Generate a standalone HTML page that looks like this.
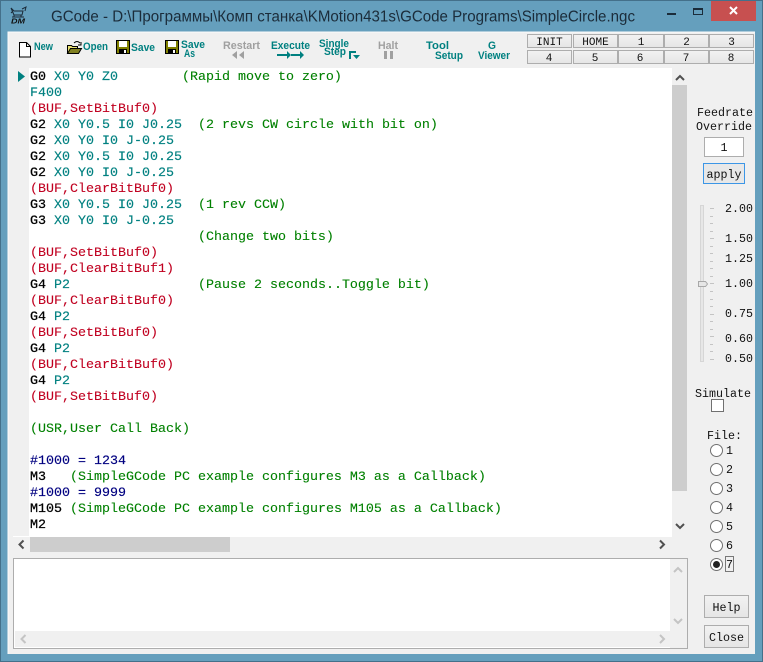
<!DOCTYPE html>
<html><head><meta charset="utf-8"><style>
html,body{margin:0;padding:0;background:#659fbd;overflow:hidden}
svg{display:block;position:absolute;left:0;top:0}
text{white-space:pre}
.c{font:13.33px "Liberation Mono",monospace}
.k{fill:#000;stroke:#000;stroke-width:.25}.t{fill:#008080;stroke:#008080;stroke-width:.15}.g{fill:#008000;stroke:#008000;stroke-width:.1}.r{fill:#c00020;stroke:#c00020;stroke-width:.1}.n{fill:#000080;stroke:#000080;stroke-width:.15}
.m{font:11.67px "Liberation Mono",monospace;fill:#111}
.b{font:bold 11px "Liberation Sans",sans-serif;fill:#008080}
.d{fill:#a0a0a0}
.btn{fill:#ececec;stroke:#adadad}
.arr{fill:none;stroke:#505050;stroke-width:2}
.arl{fill:none;stroke:#c4c4c4;stroke-width:2}
.tick{fill:#c4c4c4}
.rad{fill:#fff;stroke:#707070}
</style></head><body>
<svg width="763" height="662" viewBox="0 0 763 662" xmlns="http://www.w3.org/2000/svg">
<defs><linearGradient id="bg" x1="0" y1="0" x2="0" y2="1"><stop offset="0" stop-color="#f2f2f2"/><stop offset="1" stop-color="#e5e5e5"/></linearGradient></defs>
<rect x="0" y="0" width="763" height="662" fill="#659fbd"/>
<rect x="0.5" y="0.5" width="762" height="661" fill="none" stroke="#44708a"/>
<!-- title -->
<g stroke="#1a2a38" fill="none" stroke-width="1">
<path d="M11 8l3 3h9l-1 4h-8zM22 9l4-2-1 4M13 11l-2 2M14 15v2M21 15v2M12 17h12"/>
</g>
<text x="11" y="23.500" font-family="Liberation Sans" font-size="7" font-weight="bold" font-style="italic" fill="#111" textLength="14" lengthAdjust="spacingAndGlyphs">DM</text>
<text x="51" y="21.500" font-family="Liberation Sans,Noto Sans CJK SC,sans-serif" font-size="15.500" fill="#1b2c3a" textLength="584" lengthAdjust="spacingAndGlyphs">GCode - D:\Программы\Комп станка\KMotion431s\GCode Programs\SimpleCircle.ngc</text>
<rect x="667" y="13" width="9" height="2" fill="#1b2c3a"/>
<rect x="693.500" y="8.500" width="9" height="6" fill="none" stroke="#1b2c3a"/><rect x="693" y="8" width="10" height="2" fill="#1b2c3a"/>
<rect x="711" y="1" width="45" height="20" fill="#c75050"/>
<path d="M730 7l7 7M737 7l-7 7" stroke="#fff" stroke-width="2"/>
<!-- client -->
<rect x="8" y="32" width="747" height="622" fill="#f0f0f0"/>
<path d="M8 654V32H755" fill="none" stroke="#fbfbfb"/>
<!-- toolbar icons -->
<path d="M19.500 42.500h7l4 4v10.500h-11z" fill="#fff" stroke="#000"/><path d="M26.500 42.500v4h4" fill="none" stroke="#000"/>
<path d="M67.500 45.500h4l1 1h5v7h-10z" fill="#e8e070" stroke="#000"/><path d="M67.500 53.500l3-5h11l-3 5z" fill="#808020" stroke="#000"/><path d="M74 43c2-2 4-2 6 0M81 42v3h-3" fill="none" stroke="#000"/>
<rect x="116.500" y="40.500" width="13" height="13" fill="#808000" stroke="#000"/><rect x="119" y="41" width="8" height="6" fill="#fff"/><rect x="119" y="49" width="8" height="5" fill="#000"/><rect x="124" y="50" width="2" height="3" fill="#fff"/>
<g transform="translate(49,0)"><rect x="116.500" y="40.500" width="13" height="13" fill="#808000" stroke="#000"/><rect x="119" y="41" width="8" height="6" fill="#fff"/><rect x="119" y="49" width="8" height="5" fill="#000"/><rect x="124" y="50" width="2" height="3" fill="#fff"/></g>
<!-- toolbar text -->
<text class="b" x="34" y="50" textLength="19" lengthAdjust="spacingAndGlyphs">New</text>
<text class="b" x="83" y="50" textLength="25" lengthAdjust="spacingAndGlyphs">Open</text>
<text class="b" x="131" y="51" textLength="24" lengthAdjust="spacingAndGlyphs">Save</text>
<text class="b" x="181" y="48" textLength="24" lengthAdjust="spacingAndGlyphs">Save</text>
<text class="b" x="184" y="57" textLength="11" lengthAdjust="spacingAndGlyphs">As</text>
<text class="b d" x="223" y="49" textLength="37" lengthAdjust="spacingAndGlyphs">Restart</text>
<path d="M232 55l5-4v8zM239 55l5-4v8z" fill="#a0a0a0"/>
<text class="b" x="271" y="49" textLength="39" lengthAdjust="spacingAndGlyphs">Execute</text>
<path d="M277 54h10v-3l4 4-4 4v-3h-10zM291 54h9v-3l4 4-4 4v-3h-9z" fill="#008080"/>
<text class="b" x="319" y="47" textLength="30" lengthAdjust="spacingAndGlyphs">Single</text>
<text class="b" x="324" y="55" textLength="22" lengthAdjust="spacingAndGlyphs">Step</text>
<path d="M349 51h7v2h-5v6h-2zM353 55h7l-3.500 4z" fill="#008080"/>
<text class="b d" x="378" y="49" textLength="20" lengthAdjust="spacingAndGlyphs">Halt</text>
<rect x="384" y="51" width="3" height="8" fill="#a0a0a0"/><rect x="390" y="51" width="3" height="8" fill="#a0a0a0"/>
<text class="b" x="426" y="49" textLength="23" lengthAdjust="spacingAndGlyphs">Tool</text>
<text class="b" x="435" y="59" textLength="28" lengthAdjust="spacingAndGlyphs">Setup</text>
<text class="b" x="488" y="49" textLength="8" lengthAdjust="spacingAndGlyphs">G</text>
<text class="b" x="478" y="59" textLength="32" lengthAdjust="spacingAndGlyphs">Viewer</text>
<!-- top right buttons -->
<g fill="url(#bg)" stroke="#adadad">
<rect x="527.500" y="34.500" width="44" height="13"/><rect x="573.500" y="34.500" width="44" height="13"/><rect x="618.500" y="34.500" width="45" height="13"/><rect x="664.500" y="34.500" width="44" height="13"/><rect x="709.500" y="34.500" width="44" height="13"/>
<rect x="527.500" y="50.500" width="44" height="13"/><rect x="573.500" y="50.500" width="44" height="13"/><rect x="618.500" y="50.500" width="45" height="13"/><rect x="664.500" y="50.500" width="44" height="13"/><rect x="709.500" y="50.500" width="44" height="13"/>
</g>
<g class="m" text-anchor="middle" style="font-size:11px">
<text x="549.500" y="45">INIT</text><text x="595.500" y="45">HOME</text><text x="641" y="45">1</text><text x="686.500" y="45">2</text><text x="731.500" y="45">3</text>
<text x="549" y="61">4</text><text x="595" y="61">5</text><text x="640" y="61">6</text><text x="686" y="61">7</text><text x="731" y="61">8</text>
</g>
<!-- code area -->
<rect x="13" y="68" width="659" height="469" fill="#fff"/>
<rect x="13" y="68" width="16" height="468" fill="#f0f0f0"/>
<path d="M18 71l7 5.500-7 5.500z" fill="#008080"/>
<g class="c">
<text x="30" y="80"><tspan class="k">G0</tspan><tspan class="t"> X0 Y0 Z0</tspan><tspan class="g">        (Rapid move to zero)</tspan></text>
<text x="30" y="96" class="t">F400</text>
<text x="30" y="112" class="r">(BUF,SetBitBuf0)</text>
<text x="30" y="128"><tspan class="k">G2</tspan><tspan class="t"> X0 Y0.5 I0 J0.25</tspan><tspan class="g">  (2 revs CW circle with bit on)</tspan></text>
<text x="30" y="144"><tspan class="k">G2</tspan><tspan class="t"> X0 Y0 I0 J-0.25</tspan></text>
<text x="30" y="160"><tspan class="k">G2</tspan><tspan class="t"> X0 Y0.5 I0 J0.25</tspan></text>
<text x="30" y="176"><tspan class="k">G2</tspan><tspan class="t"> X0 Y0 I0 J-0.25</tspan></text>
<text x="30" y="192" class="r">(BUF,ClearBitBuf0)</text>
<text x="30" y="208"><tspan class="k">G3</tspan><tspan class="t"> X0 Y0.5 I0 J0.25</tspan><tspan class="g">  (1 rev CCW)</tspan></text>
<text x="30" y="224"><tspan class="k">G3</tspan><tspan class="t"> X0 Y0 I0 J-0.25</tspan></text>
<text x="30" y="240" class="g">                     (Change two bits)</text>
<text x="30" y="256" class="r">(BUF,SetBitBuf0)</text>
<text x="30" y="272" class="r">(BUF,ClearBitBuf1)</text>
<text x="30" y="288"><tspan class="k">G4</tspan><tspan class="t"> P2</tspan><tspan class="g">                (Pause 2 seconds..Toggle bit)</tspan></text>
<text x="30" y="304" class="r">(BUF,ClearBitBuf0)</text>
<text x="30" y="320"><tspan class="k">G4</tspan><tspan class="t"> P2</tspan></text>
<text x="30" y="336" class="r">(BUF,SetBitBuf0)</text>
<text x="30" y="352"><tspan class="k">G4</tspan><tspan class="t"> P2</tspan></text>
<text x="30" y="368" class="r">(BUF,ClearBitBuf0)</text>
<text x="30" y="384"><tspan class="k">G4</tspan><tspan class="t"> P2</tspan></text>
<text x="30" y="400" class="r">(BUF,SetBitBuf0)</text>
<text x="30" y="432" class="g">(USR,User Call Back)</text>
<text x="30" y="464" class="n">#1000 = 1234</text>
<text x="30" y="480"><tspan class="k">M3</tspan><tspan class="g">   (SimpleGCode PC example configures M3 as a Callback)</tspan></text>
<text x="30" y="496" class="n">#1000 = 9999</text>
<text x="30" y="512"><tspan class="k">M105</tspan><tspan class="g"> (SimpleGCode PC example configures M105 as a Callback)</tspan></text>
<text x="30" y="528" class="k">M2</text>
</g>
<!-- code scrollbars -->
<rect x="672" y="68" width="15" height="469" fill="#f0f0f0"/>
<rect x="672" y="85" width="15" height="406" fill="#cdcdcd"/>
<path class="arr" d="M676 80l4-4 4 4"/>
<path class="arr" d="M676 524l4 4 4-4"/>
<rect x="13" y="537" width="659" height="15" fill="#f0f0f0"/>
<rect x="30" y="537" width="200" height="15" fill="#cdcdcd"/>
<path class="arr" d="M23.500 540.500l-4 4 4 4"/>
<path class="arr" d="M660 540.500l4 4-4 4"/>
<!-- message box -->
<rect x="13.500" y="558.500" width="674" height="90" fill="#fff" stroke="#adadad"/>
<rect x="670" y="559" width="17" height="89" fill="#f0f0f0"/>
<rect x="15" y="631" width="655" height="16" fill="#f0f0f0"/>
<rect x="670" y="631" width="17" height="17" fill="#f0f0f0"/>
<path class="arl" d="M674 572l4-4 4 4"/>
<path class="arl" d="M674 619l4 4 4-4"/>
<path class="arl" d="M25.500 635l-4 4 4 4"/>
<path class="arl" d="M660 635l4 4-4 4"/>
<!-- right panel -->
<text class="m" x="697" y="116">Feedrate</text>
<text class="m" x="696" y="130">Override</text>
<rect x="704.500" y="137.500" width="39" height="19" fill="#fff" stroke="#adadad"/>
<text class="m" x="724" y="151" text-anchor="middle">1</text>
<rect x="703.500" y="163.500" width="41" height="20" fill="#e8e8e8" stroke="#3c96e6"/>
<text class="m" x="724" y="178" text-anchor="middle">apply</text>
<!-- slider -->
<rect x="700.500" y="205.500" width="3" height="156" fill="#e7e7e7" stroke="#d6d6d6"/>
<g class="tick">
<rect x="710" y="208" width="4" height="1"/><rect x="710" y="216" width="3" height="1"/><rect x="710" y="223" width="3" height="1"/><rect x="710" y="231" width="3" height="1"/><rect x="710" y="238" width="4" height="1"/><rect x="710" y="246" width="3" height="1"/><rect x="710" y="253" width="3" height="1"/><rect x="710" y="261" width="3" height="1"/><rect x="710" y="268" width="3" height="1"/><rect x="710" y="276" width="3" height="1"/><rect x="710" y="283" width="4" height="1"/><rect x="710" y="291" width="3" height="1"/><rect x="710" y="299" width="3" height="1"/><rect x="710" y="306" width="3" height="1"/><rect x="710" y="314" width="4" height="1"/><rect x="710" y="321" width="3" height="1"/><rect x="710" y="329" width="3" height="1"/><rect x="710" y="336" width="4" height="1"/><rect x="710" y="344" width="3" height="1"/><rect x="710" y="351" width="3" height="1"/><rect x="710" y="359" width="4" height="1"/>
</g>
<path d="M698.500 281.500h7l2 2.500-2 2.500h-7z" fill="#e6e6e6" stroke="#a8a8a8"/>
<g class="m">
<text x="725" y="212">2.00</text><text x="725" y="242">1.50</text><text x="725" y="262">1.25</text><text x="725" y="287">1.00</text><text x="725" y="317">0.75</text><text x="725" y="342">0.60</text><text x="725" y="362">0.50</text>
<text x="695" y="397">Simulate</text>
<text x="707" y="439">File:</text>
<text x="726" y="454">1</text><text x="726" y="473">2</text><text x="726" y="492">3</text><text x="726" y="511">4</text><text x="726" y="530">5</text><text x="726" y="549">6</text><text x="726" y="568">7</text>
</g>
<rect x="711.500" y="399.500" width="12" height="12" fill="#fff" stroke="#707070"/>
<circle class="rad" cx="716.500" cy="450.500" r="6"/><circle class="rad" cx="716.500" cy="469.500" r="6"/><circle class="rad" cx="716.500" cy="488.500" r="6"/><circle class="rad" cx="716.500" cy="507.500" r="6"/><circle class="rad" cx="716.500" cy="526.500" r="6"/><circle class="rad" cx="716.500" cy="545.500" r="6"/><circle class="rad" cx="716.500" cy="564.500" r="6"/>
<circle cx="716.500" cy="564.500" r="3.500" fill="#222"/>
<rect x="725.500" y="556.500" width="8" height="15" fill="none" stroke="#000" stroke-dasharray="1 1"/>
<rect x="704.500" y="595.500" width="44" height="22" fill="url(#bg)" stroke="#adadad"/>
<rect x="704.500" y="625.500" width="44" height="22" fill="url(#bg)" stroke="#adadad"/>
<text class="m" x="726.500" y="611" text-anchor="middle">Help</text>
<text class="m" x="726.500" y="641" text-anchor="middle">Close</text>
</svg>
</body></html>
